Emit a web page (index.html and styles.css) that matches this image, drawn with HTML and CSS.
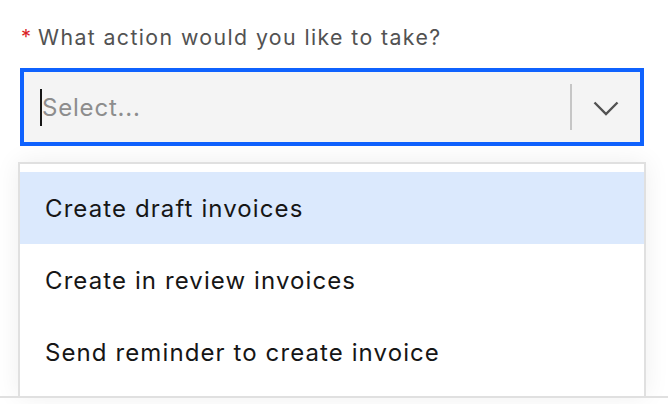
FILE: index.html
```html
<!DOCTYPE html>
<html lang="en">
<head>
<meta charset="utf-8">
<title>Action select</title>
<link rel="stylesheet" href="styles.css">
</head>
<body>
<div class="page">
  <div class="field">
    <div class="label"><span class="req">*</span><span class="label-text">What action would you like to take?</span></div>
    <div class="combo">
      <div class="combo-input">
        <span class="caret"></span><span class="placeholder">Select...</span>
      </div>
      <span class="sep"></span>
      <span class="chev">
        <svg width="26" height="15" viewBox="0 0 26 15"><polyline points="1.5,1.5 13,13 24.5,1.5" fill="none" stroke="#525252" stroke-width="2.4"/></svg>
      </span>
    </div>
    <ul class="menu">
      <li class="item active">Create draft invoices</li>
      <li class="item">Create in review invoices</li>
      <li class="item">Send reminder to create invoice</li>
    </ul>
  </div>
  <div class="rule"></div>
</div>
</body>
</html>
```
FILE: styles.css
```css
* { box-sizing: border-box; }
html, body { margin: 0; padding: 0; background: #ffffff; }
body { font-family: "Inter", "Noto Sans", sans-serif; color: #161616; }
.page { width: 668px; height: 404px; display: flex; flex-direction: column; overflow: hidden; }
.field { padding: 0 24px 0 20px; display: flex; flex-direction: column; height: 396px; }
.label { height: 68px; display: flex; align-items: flex-start; padding-top: 23px; font-size: 21.3px; line-height: 28px; color: #525252; letter-spacing: 1.4px; }
.req { color: #da1e28; width: 18px; padding-left: 1px; font-size: 20px; letter-spacing: 0; }
.combo { height: 78px; border: 4px solid #0f62fe; background: #f4f4f4; display: flex; align-items: center; }
.combo-input { flex: 1; display: flex; align-items: center; padding-left: 16px; height: 100%; }
.caret { width: 2px; height: 37px; background: #161616; }
.placeholder { font-size: 24px; color: #8d8d8d; letter-spacing: 0.8px; }
.sep { width: 2px; height: 46px; background: #c6c6c6; }
.chev { width: 68px; display: flex; justify-content: center; align-items: center; padding-top: 2px; }
.chev svg { display: block; }
.menu { list-style: none; margin: 16px -2px 0; padding: 8px 0 0; border: 2px solid #e0e0e0; border-bottom: none; background: #fff; flex: 1; box-shadow: 0 0 24px rgba(0,0,0,0.07); }
.item { height: 72px; display: flex; align-items: center; padding-left: 25px; font-size: 24px; color: #161616; letter-spacing: 1.1px; }
.item.active { background: #dbe9fd; }
.rule { height: 2px; background: #e0e0e0; }
```
